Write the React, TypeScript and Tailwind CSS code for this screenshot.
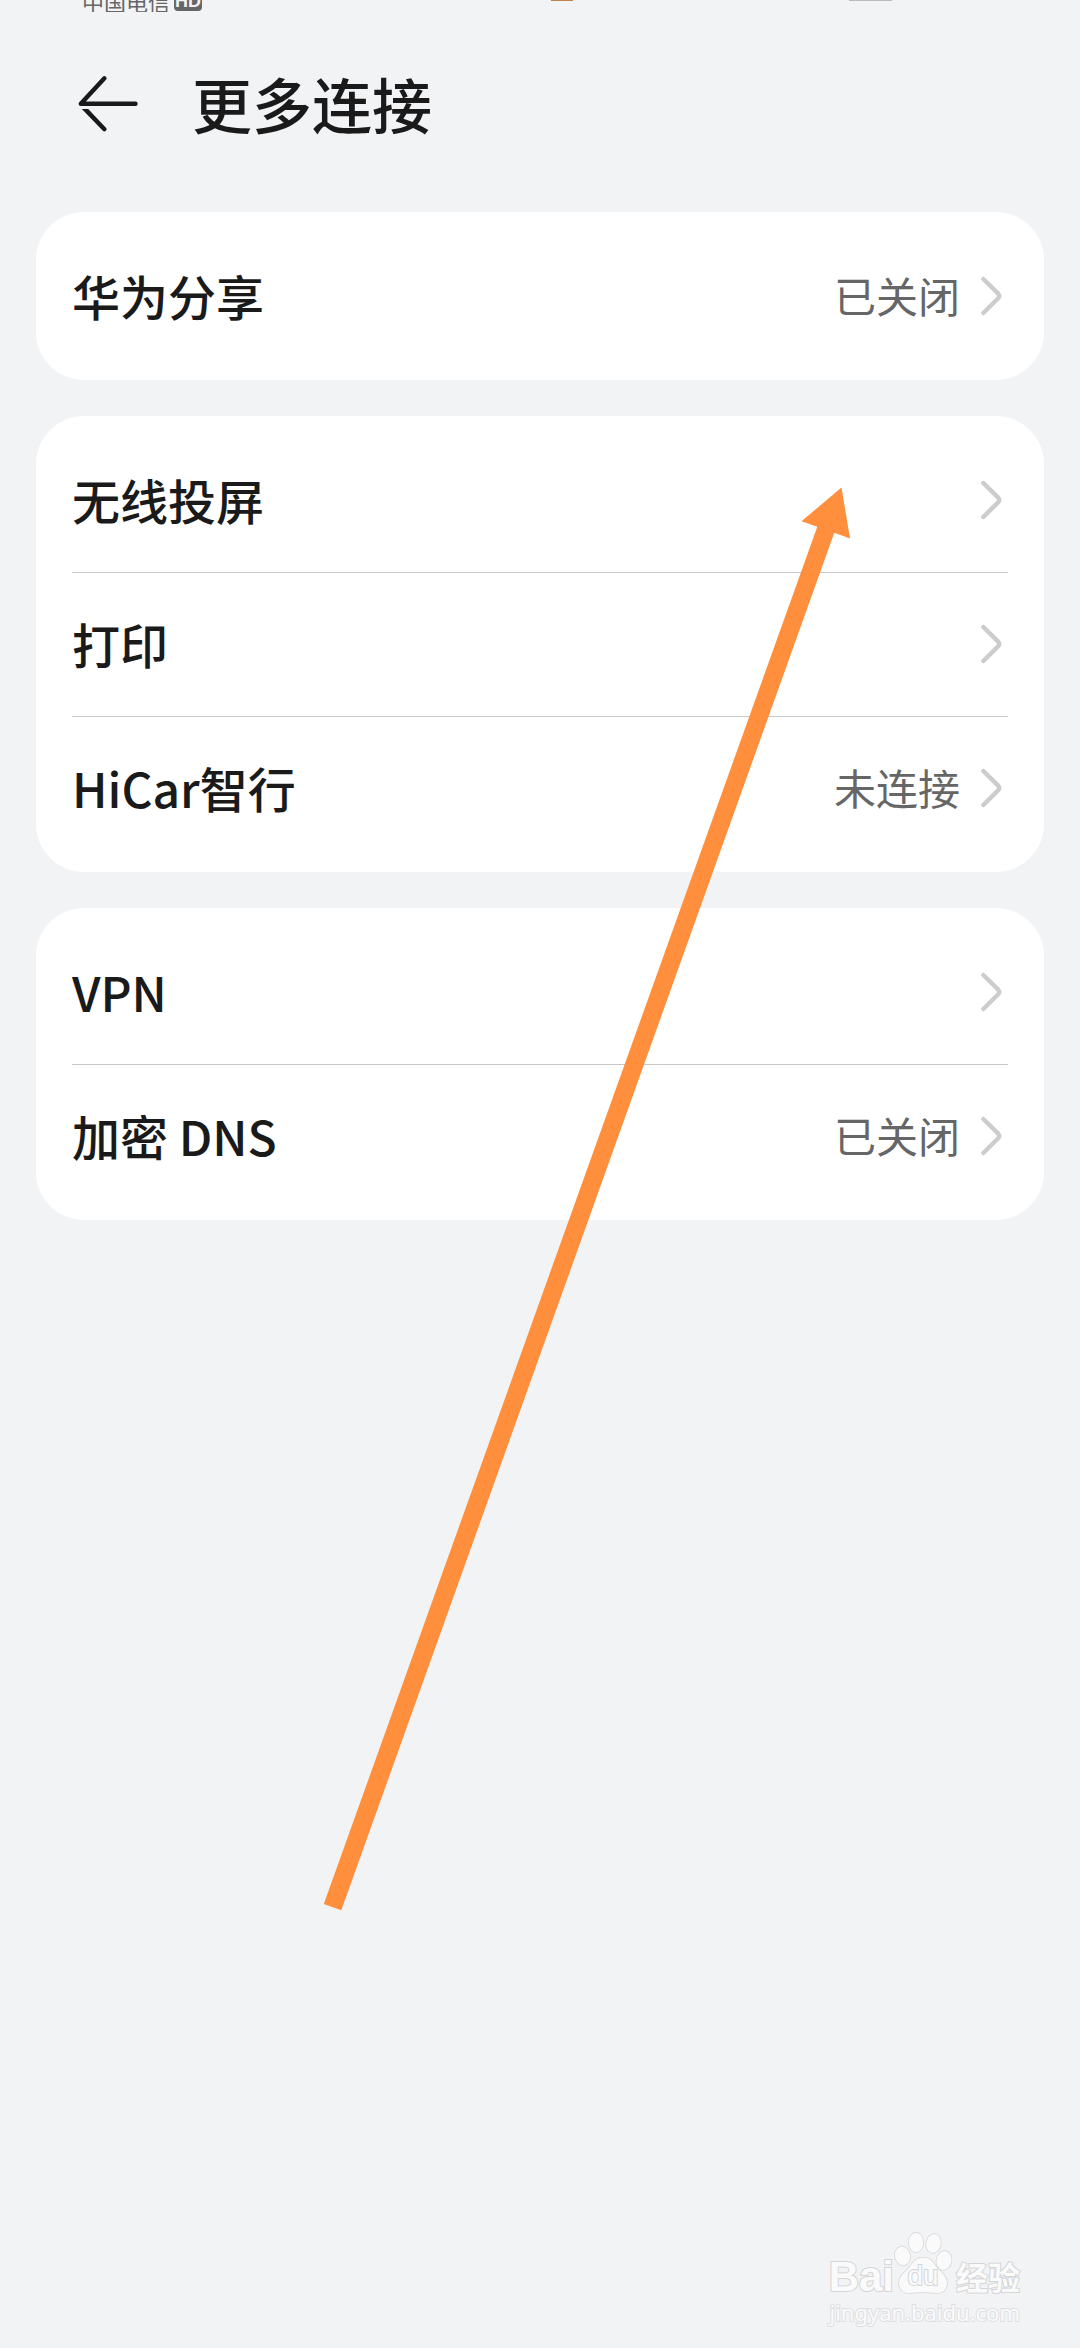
/**
 * ============================================================
 * MORE CONNECTIONS SETTINGS PAGE
 * ============================================================
 * Purpose: Grouped list of connection settings, with a pointer
 * arrow and the site watermark laid over the page.
 * ============================================================
 */

import React from 'react';

interface SettingItem {
  id: string;
  label: string;
  status?: string;
}

const GROUPS: SettingItem[][] = [
  [{ id: 'share', label: '华为分享', status: '已关闭' }],
  [
    { id: 'cast', label: '无线投屏' },
    { id: 'print', label: '打印' },
    { id: 'hicar', label: 'HiCar智行', status: '未连接' },
  ],
  [
    { id: 'vpn', label: 'VPN' },
    { id: 'dns', label: '加密 DNS', status: '已关闭' },
  ],
];

function StatusBar() {
  return (
    <div className="relative flex h-3 items-end gap-1 overflow-hidden pl-[82px]">
      <span className="text-[22px] leading-[22px] text-[#666666]">中国电信</span>
      <span className="mb-px flex h-5 w-7 items-end justify-center rounded-sm bg-[#666666] pb-0.5 font-['Liberation_Sans'] text-lg leading-4 font-bold text-[#f1f3f5]">
        HD
      </span>
      {/* Lower edges of the notification and battery icons */}
      <span className="absolute top-0 left-[51%] h-px w-[22px] bg-[#c4814f]" />
      <span className="absolute top-0 right-[188px] h-px w-[43px] bg-[#b9babc]" />
    </div>
  );
}

function PageHeader() {
  return (
    <header className="flex h-[186px] items-center gap-12 pl-[72px]">
      <button type="button" aria-label="返回" className="shrink-0">
        <svg width="72" height="72" viewBox="0 0 72 72" fill="none" aria-hidden="true">
          <path
            d="M63.5 34.8H8.8L32.4 9.3"
            stroke="#1a1a1a"
            strokeWidth="4.4"
            strokeLinecap="round"
            strokeLinejoin="round"
          />
          <path d="M9.8 40H16.2L34 58.7A2.2 2.2 0 0 1 30.8 61.8Z" fill="#1a1a1a" />
        </svg>
      </button>
      <h1 className="pb-1 text-[60px] leading-[72px] font-medium text-[#1a1a1a]">更多连接</h1>
    </header>
  );
}

function SettingRow({ item }: { item: SettingItem }) {
  return (
    <li className="border-t border-[#c8c8c8] first:border-transparent">
      <button type="button" className="flex h-[143px] w-full items-center gap-3 pb-0.5 text-left">
        <span className="flex-1 pb-0.5 text-5xl font-medium text-[#1a1a1a]">{item.label}</span>
        {item.status && (
          <span className="pb-0.5 text-[42px] leading-[48px] text-[#666666]">{item.status}</span>
        )}
        <svg
          width="36"
          height="72"
          viewBox="0 0 36 72"
          fill="none"
          stroke="#cccccc"
          strokeWidth="4.4"
          strokeLinecap="round"
          strokeLinejoin="round"
          aria-hidden="true"
        >
          <path d="M11.3 19L26.2 33.6Q28.2 36 26.2 38.2L11.3 53" />
        </svg>
      </button>
    </li>
  );
}

function PointerArrow() {
  return (
    <svg
      className="pointer-events-none absolute top-[487px] left-[323px]"
      width="528"
      height="1424"
      viewBox="323 487 528 1424"
      fill="#ff8f3c"
      aria-hidden="true"
    >
      <path d="M841.5 487.5L850 538.5L834.3 532.8L341.3 1910.3L323.8 1904L817.3 526.8L801.5 521.3Z" />
    </svg>
  );
}

function Watermark() {
  return (
    <div className="pointer-events-none absolute right-[60px] bottom-[22px] text-[#fafafb] [-webkit-text-stroke:2px_#d4d5d7] [paint-order:stroke_fill]">
      <div className="flex h-[62px] items-end justify-end">
        <span className="font-['Liberation_Sans'] text-[42px] leading-[34px] font-bold">Bai</span>
        <span className="relative">
          <svg width="58" height="62" viewBox="0 0 58 62" fill="#fafafb" stroke="#d2d3d5" strokeWidth="1.4">
            <ellipse cx="8.5" cy="24" rx="7.5" ry="9.5" transform="rotate(-12 8.5 24)" />
            <ellipse cx="22" cy="10.5" rx="7.3" ry="9.8" />
            <ellipse cx="39.5" cy="11.5" rx="7.3" ry="9.5" transform="rotate(12 39.5 11.5)" />
            <ellipse cx="50" cy="28.5" rx="7.5" ry="9.5" transform="rotate(10 50 28.5)" />
            <path d="M29 25.5C36 25.5 39 30 42 34.5C46 40 53 43 53 51C53 58 48 62 41 61C33 60 25 60 17 61C10 62 5 58 5 51C5 43 12 40 16 34.5C19 30 22 25.5 29 25.5Z" />
          </svg>
          <span className="absolute inset-x-0 bottom-1 text-center font-['Liberation_Sans'] text-[28px] leading-7">
            du
          </span>
        </span>
        <span className="pl-1 text-[32px] leading-9 font-bold">经验</span>
      </div>
      <div className="mt-1 text-right font-['Noto_Sans'] text-[22px] leading-7 [-webkit-text-stroke:2px_#dedfe1]">
        jingyan.baidu.com
      </div>
    </div>
  );
}

export default function App() {
  return (
    <div className="relative min-h-screen bg-[#f1f3f5] font-['Noto_Sans_CJK_SC',sans-serif]">
      <StatusBar />
      <PageHeader />

      <main className="flex flex-col gap-9 px-9 pt-3.5">
        {GROUPS.map((group) => (
          <ul key={group[0].id} className="rounded-[48px] bg-white px-9 py-3">
            {group.map((item) => (
              <SettingRow key={item.id} item={item} />
            ))}
          </ul>
        ))}
      </main>

      <PointerArrow />
      <Watermark />
    </div>
  );
}
